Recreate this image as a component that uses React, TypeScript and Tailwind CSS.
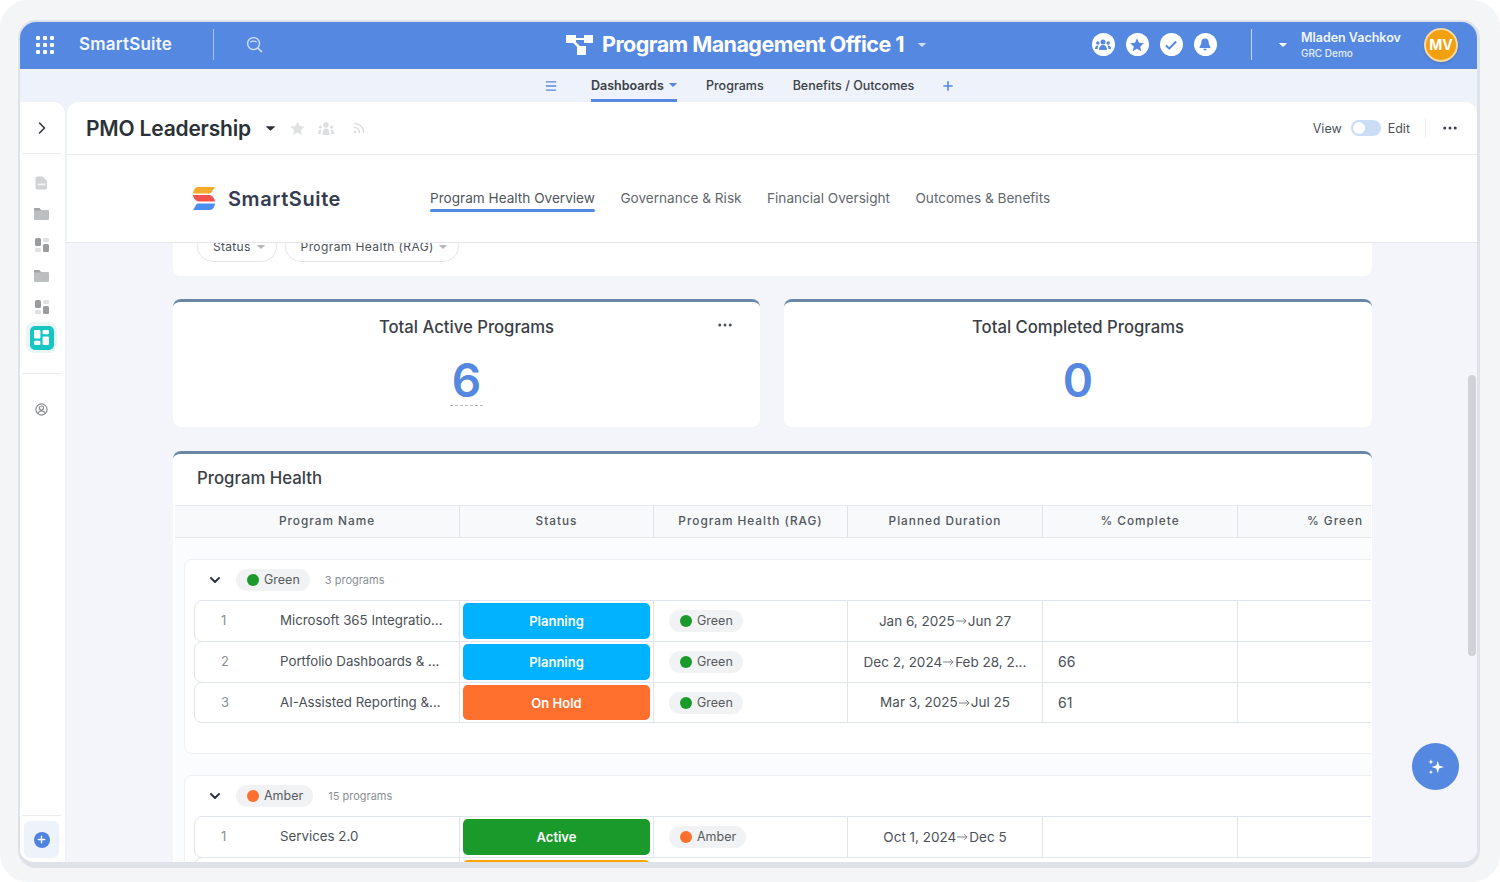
import React from 'react';
import { ChevronDown, ChevronRight, Menu, MoreHorizontal, Plus, Rss } from 'lucide-react';

const Caret = ({ className }: { className: string }) => (
  <svg viewBox="0 0 10 5" className={className} fill="currentColor">
    <path d="M0.6 0h8.8c.4 0 .6.4.3.7L5.4 4.7c-.2.2-.6.2-.8 0L.3.7C0 .4.2 0 .6 0z" />
  </svg>
);

const GridDots = () => (
  <div className="grid grid-cols-3 gap-[3px] w-[18px]">
    {Array.from({ length: 9 }).map((_, i) => (
      <span key={i} className="w-1 h-1 bg-white rounded-[1px]" />
    ))}
  </div>
);

const FlowIcon = () => (
  <svg viewBox="0 0 27 20" className="w-[27px] h-[20px]" fill="white">
    <rect x="0" y="0" width="10" height="8" />
    <rect x="18" y="0" width="9" height="8" />
    <rect x="11" y="11" width="9" height="9" />
    <rect x="9" y="3" width="10" height="2" />
    <path d="M7 6l6.500 6.500" stroke="white" strokeWidth="2.500" />
  </svg>
);

const SearchRing = () => (
  <svg viewBox="0 0 18 18" className="w-[17px] h-[17px]" fill="none" stroke="#cfdef7">
    <circle cx="8" cy="8" r="6.300" strokeWidth="1.500" />
    <path d="M12.600 12.800L16.500 16.500" strokeWidth="1.600" strokeLinecap="round" />
    <path d="M5 6.300c1.200-1.200 4.400-1.300 6 0" strokeWidth="1.300" strokeLinecap="round" />
  </svg>
);

const DocIcon = () => (
  <svg viewBox="0 0 14 15" className="w-[13px] h-[14px]">
    <path d="M2.500 0.500h5.500l5 4.500v7.500a2 2 0 0 1-2 2h-8.500a2 2 0 0 1-2-2v-10a2 2 0 0 1 2-2z" fill="#d0d2d4" />
    <rect x="3" y="8" width="8" height="2" fill="#f2f2f2" />
  </svg>
);

const FolderIcon = () => (
  <svg viewBox="0 0 15 12" className="w-[15px] h-[12px]">
    <path d="M1 0h4.500l1.500 2h7a1 1 0 0 1 1 1v8a1 1 0 0 1-1 1H1a1 1 0 0 1-1-1V1a1 1 0 0 1 1-1z" fill="#bcbfc0" />
    <path d="M0 1a1 1 0 0 1 1-1h4.500l1.500 2.500H0z" fill="#a2a5a6" />
  </svg>
);

const BoardIcon = () => (
  <svg viewBox="0 0 14 14" className="w-[14px] h-[14px]">
    <rect x="0" y="0" width="6" height="8" rx="1.500" fill="#9a9c9e" />
    <rect x="8" y="0" width="6" height="4" rx="1.200" fill="#e0e1e2" />
    <rect x="0" y="10" width="6" height="4" rx="1.200" fill="#e0e1e2" />
    <rect x="8" y="6" width="6" height="8" rx="1.500" fill="#9a9c9e" />
  </svg>
);

const Circle = ({ children }: { children: React.ReactNode }) => (
  <div className="w-[23px] h-[23px] rounded-full bg-white flex items-center justify-center">{children}</div>
);

const Rag = ({ color, label }: { color: string; label: string }) => (
  <div className="inline-flex items-center h-[22px] rounded-full bg-[#f1f2f3] pl-[11px] pr-[10px] gap-[5px]">
    <span className={`w-3 h-3 rounded-full ${color}`} />
    <span className="text-[12.500px] pt-px text-[#555b60]">{label}</span>
  </div>
);

const Duration = ({ from, to }: { from: string; to: string }) => (
  <div className="flex items-center justify-center text-[13.500px] text-[#4b5157]">
    <span>{from}</span>
    <svg viewBox="0 0 12 8" className="w-[11px] h-2 mx-[1px]" fill="none" stroke="#6f7479" strokeWidth="1">
      <path d="M0 4h11M8 1l3 3-3 3" />
    </svg>
    <span>{to}</span>
  </div>
);

type RowData = {
  n: number;
  name: string;
  status: string;
  statusBg: string;
  ragColor: string;
  rag: string;
  from: string;
  to: string;
  pct?: string;
};

const Row = ({ row, last }: { row: RowData; last?: boolean }) => (
  <div className={`flex w-[1300px] border border-[#e1e5ee] rounded-l-lg bg-white ${last ? 'h-[41px]' : 'h-[42px] -mb-px'}`}>
    <div className="w-[85px] shrink-0 pl-[26px] flex items-center text-[13px] text-[#8b8f94]">{row.n}</div>
    <div className="w-[179px] shrink-0 flex items-center text-[13.300px] text-[#4b5157] whitespace-nowrap">{row.name}</div>
    <div className="w-[194px] shrink-0 border-l border-[#e1e5ee] flex items-center px-[3px]">
      <div className={`w-full ${last ? 'h-[35px]' : 'h-[36px]'} pt-[2px] rounded-[5px] flex items-center justify-center text-white text-[13px] font-semibold ${row.statusBg}`}>
        {row.status}
      </div>
    </div>
    <div className="w-[194px] shrink-0 border-l border-[#e1e5ee] flex items-center pl-[15px]">
      <Rag color={row.ragColor} label={row.rag} />
    </div>
    <div className="w-[195px] shrink-0 border-l border-[#e1e5ee] flex items-center justify-center">
      <Duration from={row.from} to={row.to} />
    </div>
    <div className="w-[195px] shrink-0 border-l border-[#e1e5ee] flex items-center pl-[15px] pb-px text-[14px] text-[#4b5157]">{row.pct}</div>
    <div className="flex-1 border-l border-[#e1e5ee]" />
  </div>
);

const GroupHead = ({ dot, label, count, gap }: { dot: string; label: string; count: string; gap: string }) => (
  <div className="h-[40px] flex items-center">
    <ChevronDown className="w-[16px] h-[16px] ml-[22px] text-[#2b3138]" strokeWidth={2.800} />
    <div className="ml-[13px]">
      <Rag color={dot} label={label} />
    </div>
    <span className={`text-[11px] text-[#8b8f94] ${gap}`}>{count}</span>
  </div>
);

const greenRows: RowData[] = [
  { n: 1, name: 'Microsoft 365 Integratio...', status: 'Planning', statusBg: 'bg-[#00b2ff]', ragColor: 'bg-[#1a9a2b]', rag: 'Green', from: 'Jan 6, 2025', to: 'Jun 27' },
  { n: 2, name: 'Portfolio Dashboards & ...', status: 'Planning', statusBg: 'bg-[#00b2ff]', ragColor: 'bg-[#1a9a2b]', rag: 'Green', from: 'Dec 2, 2024', to: 'Feb 28, 2...', pct: '66' },
  { n: 3, name: 'AI-Assisted Reporting &...', status: 'On Hold', statusBg: 'bg-[#ff6f2e]', ragColor: 'bg-[#1a9a2b]', rag: 'Green', from: 'Mar 3, 2025', to: 'Jul 25', pct: '61' },
];

const amberRow: RowData = {
  n: 1, name: 'Services 2.0', status: 'Active', statusBg: 'bg-[#1a9a2b]', ragColor: 'bg-[#ff6f2e]', rag: 'Amber', from: 'Oct 1, 2024', to: 'Dec 5',
};

const columns = [
  { label: 'Program Name', w: 'w-[285px] pl-[20px]' },
  { label: 'Status', w: 'w-[194px]' },
  { label: 'Program Health (RAG)', w: 'w-[194px]' },
  { label: 'Planned Duration', w: 'w-[195px]' },
  { label: '% Complete', w: 'w-[195px]' },
  { label: '% Green', w: 'w-[195px]' },
];

const Kpi = ({ title, value, menu, className }: { title: string; value: string; menu?: boolean; className: string }) => (
  <div className={`relative h-[128px] bg-white rounded-lg border-t-[3px] border-[#6a87a8] flex flex-col items-center ${className}`}>
    <div className="mt-[15px] text-[16.700px] leading-[20px] font-medium text-[#3a4046]">{title}</div>
    <div className={`mt-[18px] text-[46px] leading-[50px] font-semibold text-[#5588e0] ${menu ? 'border-b border-dashed border-[#b5b8bc] px-[2px]' : ''}`}>{value}</div>
    {menu && <MoreHorizontal className="absolute right-[26px] top-[14px] w-[18px] h-[18px] text-[#4b5157]" />}
  </div>
);

export default function App() {
  return (
    <div className="w-[1500px] h-[882px] overflow-hidden bg-white font-['Inter',sans-serif]">
      <div className="w-full h-full bg-[#f4f5f7] rounded-[28px] pl-[18px] pt-[20px]">
        <div className="relative w-[1462px] h-[848px] border-2 border-r-[3px] border-b-[6px] border-[#dfe2e9] rounded-[18px] overflow-hidden bg-[#edf2fb] flex flex-col">
          {/* Top bar */}
          <div className="h-[47px] shrink-0 bg-[#5588e0] flex items-center text-white pb-[2px]">
            <div className="ml-[16px]"><GridDots /></div>
            <div className="ml-[25px] w-[98px] text-[17px] font-semibold tracking-[0.2px] text-[#f2f6fd]">SmartSuite</div>
            <div className="ml-[36px] w-px h-[31px] bg-[#a9c3ef]" />
            <div className="ml-[32px]"><SearchRing /></div>
            <div className="ml-[303px]"><FlowIcon /></div>
            <div className="ml-[9px] text-[21.500px] font-bold tracking-[-0.55px] whitespace-nowrap">Program Management Office 1</div>
            <Caret className="ml-[14px] w-2 h-1 text-[#cfdef7]" />
            <div className="ml-[166px] flex gap-[11px]">
              <Circle>
                <svg viewBox="0 0 16 12" className="w-[16px] h-[12px]" fill="#5588e0">
                  <circle cx="8" cy="3" r="2.500" /><circle cx="2.800" cy="4" r="1.700" /><circle cx="13.200" cy="4" r="1.700" />
                  <path d="M4 11c0-3 1.500-5 4-5s4 2 4 5zM0 10c0-2 1-3.500 2.800-3.500.6 0 .8.100 .8.100-.6 1-1 2-1 3.400zM16 10c0-2-1-3.500-2.800-3.500-.6 0-.8.100-.8.100.6 1 1 2 1 3.400z" />
                </svg>
              </Circle>
              <Circle>
                <svg viewBox="0 0 24 24" className="w-[16px] h-[16px]" fill="#5588e0"><path d="M12 2l3 6.600 7.200.8-5.400 4.800 1.500 7.100L12 17.600 5.700 21.300l1.500-7.100L1.800 9.400 9 8.600z" /></svg>
              </Circle>
              <Circle>
                <svg viewBox="0 0 14 11" className="w-[12px] h-[10px]" fill="none" stroke="#5588e0" strokeWidth="2.400"><path d="M1 6l4 3.500L13 1.500" /></svg>
              </Circle>
              <Circle>
                <svg viewBox="0 0 14 15" className="w-[12px] h-[13px]" fill="#5588e0"><path d="M7 0.500c2.800 0 4.300 2 4.300 4.500 0 3 1.700 4.500 2.200 6.500h-13c.5-2 2.200-3.500 2.200-6.500C2.700 2.500 4.200.500 7 .500zM5 12.500h4a2 2 0 0 1-4 0z" /></svg>
              </Circle>
            </div>
            <div className="ml-[34px] w-px h-[31px] bg-[#c6d7f5]" />
            <Caret className="ml-[27px] w-2 h-1 text-white" />
            <div className="ml-[14px] w-[123px] flex flex-col">
              <span className="text-[12.500px] leading-[16px] font-semibold text-[#f2f6fd]">Mladen Vachkov</span>
              <span className="text-[10px] leading-[14px] font-medium text-[#e3ecfb]">GRC Demo</span>
            </div>
            <div className="w-[34px] h-[34px] rounded-full bg-[#f29f10] border-2 border-[#f8d99e] shadow flex items-center justify-center text-[14px] font-bold">MV</div>
          </div>

          {/* App tabs */}
          <div className="h-[33px] shrink-0 flex items-stretch text-[12.500px] font-medium text-[#3a4046]">
            <div className="ml-[524px] w-[47px] flex items-center"><Menu className="w-[14px] h-[14px] text-[#5588e0]" strokeWidth={2.200} /></div>
            <div className="w-[86px] flex items-center justify-between border-b-[3px] border-[#5588e0] font-semibold pt-[4px]">
              <span>Dashboards</span>
              <Caret className="w-2 h-1 text-[#5588e0] mb-[3px]" />
            </div>
            <div className="ml-[29px] flex items-center pt-px">Programs</div>
            <div className="ml-[29px] flex items-center pt-px">Benefits / Outcomes</div>
            <div className="ml-[27px] flex items-center"><Plus className="w-[14px] h-[14px] text-[#5588e0]" strokeWidth={2.800} /></div>
          </div>

          <div className="flex-1 min-h-0 flex gap-[2px]">
            {/* Sidebar */}
            <div className="w-[45px] shrink-0 bg-white rounded-tr-xl flex flex-col items-center pr-[2px]">
              <div className="h-[52px] w-[39px] shrink-0 border-b border-[#e9ebef] flex items-center justify-center">
                <ChevronRight className="w-[20px] h-[20px] text-[#2b3138]" strokeWidth={1.800} />
              </div>
              <div className="flex flex-col items-center">
                <div className="h-[31px] mt-[13px] flex items-center"><DocIcon /></div>
                <div className="h-[31px] flex items-center"><FolderIcon /></div>
                <div className="h-[31px] flex items-center"><BoardIcon /></div>
                <div className="h-[31px] flex items-center"><FolderIcon /></div>
                <div className="h-[31px] flex items-center"><BoardIcon /></div>
                <div className="w-[31px] h-[31px] rounded-lg bg-[#e8f6f6] flex items-center justify-center">
                  <div className="w-[24px] h-[24px] rounded-[5px] bg-[#17c5c2] flex items-center justify-center">
                    <svg viewBox="0 0 14 14" className="w-[15px] h-[15px]" fill="white">
                      <rect x="0" y="0" width="6" height="8" rx="1.200" /><rect x="8" y="0" width="6" height="4" rx="1.200" />
                      <rect x="0" y="10" width="6" height="4" rx="1.200" /><rect x="8" y="6" width="6" height="8" rx="1.200" />
                    </svg>
                  </div>
                </div>
              </div>
              <div className="mt-[20px] w-[39px] border-t border-[#e9ebef]" />
              <svg viewBox="0 0 14 14" className="mt-[29px] w-[13px] h-[13px]" fill="none" stroke="#84878a" strokeWidth="1.200">
                <circle cx="7" cy="7" r="6" /><circle cx="7" cy="5.500" r="2.200" /><path d="M3 11c1-2 2.500-2.500 4-2.500s3 .5 4 2.500" />
              </svg>
              <div className="mt-auto w-[39px] border-t border-[#e9ebef]" />
              <div className="mt-[5px] mb-[4px] w-[35px] h-[37px] rounded-md bg-[#edf2fb] flex items-center justify-center">
                <div className="w-4 h-4 rounded-full bg-[#4f82de] flex items-center justify-center">
                  <Plus className="w-[11px] h-[11px] text-white" strokeWidth={3} />
                </div>
              </div>
            </div>

            {/* Main */}
            <div className="flex-1 min-w-0 flex flex-col rounded-t-xl overflow-hidden">
              <div className="h-[53px] shrink-0 bg-white border-b border-[#e9ebef] flex items-center">
                <span className="ml-[19px] pt-[2px] text-[21px] font-semibold tracking-[-0.2px] text-[#2b3138]">PMO Leadership</span>
                <Caret className="ml-[15px] w-[9px] h-[5px] text-[#2b3138]" />
                <svg viewBox="0 0 24 24" className="ml-[14px] w-[17px] h-[17px]" fill="#e0e1e2"><path d="M12 2l3 6.600 7.200.8-5.400 4.800 1.500 7.100L12 17.600 5.700 21.300l1.500-7.100L1.800 9.400 9 8.600z" /></svg>
                <svg viewBox="0 0 16 13" className="ml-[12px] w-4 h-[13px]" fill="#dcdddf">
                  <circle cx="8" cy="3" r="2.700" /><circle cx="2.500" cy="5" r="1.600" /><circle cx="13.500" cy="5" r="1.600" />
                  <path d="M4.500 13c0-4 1-6.500 3.500-6.500s3.500 2.500 3.500 6.500zM0 12c0-2 .8-4.500 2.500-4.500.5 0 .9.200.9.200-.4 1-.7 2.500-.7 4.300zM16 12c0-2-.8-4.500-2.500-4.500-.5 0-.9.200-.9.200.4 1 .7 2.500.7 4.300z" />
                </svg>
                <Rss className="ml-[18px] w-[14px] h-[14px] text-[#dcdddf]" strokeWidth={2.200} />
                <div className="ml-auto flex items-center text-[12.500px] text-[#4b5157]">
                  <span className="pt-[2px]">View</span>
                  <div className="ml-[9px] w-[30px] h-4 rounded-full bg-[#cbdcf6] p-[2px]">
                    <div className="w-3 h-3 rounded-full bg-white" />
                  </div>
                  <span className="ml-[7px] pt-[2px]">Edit</span>
                  <div className="ml-[15px] w-px h-[20px] bg-[#eceef1]" />
                  <MoreHorizontal className="ml-[15px] mr-[18px] w-[18px] h-[18px] text-[#3a4046]" />
                </div>
              </div>

              <div className="h-[88px] shrink-0 bg-white border-b border-[#e5e7ec] flex items-center">
                <svg viewBox="0 0 22 23" className="ml-[126px] w-[22px] h-[23px]">
                  <path d="M5 0h17l-2.500 4c-.8 1.500-2 2.500-3.500 2.500H0C.5 3 2 0 5 0z" fill="#f7ab2e" />
                  <path d="M0 8h16c3 0 5.500 3 6 6.500H6c-3 0-5.500-3-6-6.500z" fill="#f4524f" />
                  <path d="M5 16.500h17c-.5 3.500-2 6.500-5 6.500H0l2.500-4c.8-1.500 1-2.500 2.500-2.500z" fill="#4d8ff0" />
                </svg>
                <span className="ml-[13px] w-[202px] text-[20px] font-semibold tracking-[0.6px] text-[#343b52]">SmartSuite</span>
                <div className="flex gap-[25.500px] text-[13.600px] text-[#62676c] pb-[1px]">
                  <div className="relative text-[#50565b]">
                    Program Health Overview
                    <div className="absolute left-0 right-0 -bottom-[4px] h-[3px] rounded-full bg-[#5588e0]" />
                  </div>
                  <span>Governance &amp; Risk</span>
                  <span>Financial Oversight</span>
                  <span>Outcomes &amp; Benefits</span>
                </div>
              </div>

              <div className="flex-1 min-h-0 bg-[#f3f5fb] pl-[106px] overflow-hidden">
                <div className="w-[1199px] h-full flex flex-col">
                  <div className="h-[33px] shrink-0 bg-white rounded-b-lg overflow-hidden">
                    <div className="flex gap-[8px] pl-[24px] -mt-[12px]">
                      <div className="h-[31px] pl-[15px] pr-[11px] rounded-full border border-[#e4e6ea] flex items-center gap-[6px] text-[12px] text-[#4b5157] tracking-[0.3px]">
                        Status <Caret className="w-2 h-1 text-[#b5b8bc]" />
                      </div>
                      <div className="h-[31px] pl-[15px] pr-[11px] rounded-full border border-[#e4e6ea] flex items-center gap-[5px] text-[12px] text-[#4b5157] tracking-[0.4px]">
                        Program Health (RAG) <Caret className="w-2 h-1 text-[#b5b8bc]" />
                      </div>
                    </div>
                  </div>

                  <div className="mt-[23px] flex gap-[24px] shrink-0">
                    <Kpi title="Total Active Programs" value="6" menu className="w-[587px]" />
                    <Kpi title="Total Completed Programs" value="0" className="flex-1" />
                  </div>

                  <div className="mt-[24px] flex-1 min-h-0 bg-white rounded-t-lg border-t-[3px] border-[#6a87a8] overflow-hidden">
                    <div className="h-[51px] pl-[24px] pb-[2px] flex items-center text-[16.800px] font-medium text-[#3a4046]">Program Health</div>
                    <div className="ml-[2px] w-[1196px] overflow-hidden bg-[#fbfcfe]">
                      <div className="h-[33px] w-[1300px] flex bg-[#f8f9fb] border-y border-[#e5e7ec]">
                        {columns.map(c => (
                          <div key={c.label} className={`${c.w} shrink-0 border-r border-[#dfe2e8] flex items-center justify-center pt-px text-[11.800px] font-medium tracking-[1px] text-[#50565b]`}>
                            {c.label}
                          </div>
                        ))}
                      </div>
                      <div className="pt-[21px] pl-[9px]">
                        <div className="h-[195px] w-[1300px] bg-white border border-[#eef0f4] rounded-l-lg">
                          <GroupHead dot="bg-[#1a9a2b]" label="Green" count="3 programs" gap="ml-[15px]" />
                          <div className="pl-[9px]">
                            {greenRows.map((r, i) => (
                              <Row key={r.n} row={r} last={i === 2} />
                            ))}
                          </div>
                        </div>
                        <div className="mt-[21px] w-[1300px] bg-white border border-[#eef0f4] rounded-l-lg">
                          <GroupHead dot="bg-[#ff6f2e]" label="Amber" count="15 programs" gap="ml-[15px]" />
                          <div className="pl-[9px]">
                            <Row row={amberRow} />
                            <div className="flex h-[20px] w-[1300px] border border-[#e1e5ee] rounded-l-lg">
                              <div className="w-[264px] shrink-0" />
                              <div className="w-[194px] shrink-0 border-l border-[#e1e5ee] px-[3px] pt-[2px]">
                                <div className="h-[20px] rounded-[5px] bg-[#ffa500]" />
                              </div>
                            </div>
                          </div>
                        </div>
                      </div>
                    </div>
                  </div>
                </div>
              </div>
            </div>
          </div>

          {/* Scrollbar + AI button sit over the page */}
          <div className="absolute right-[1px] top-[353px] w-[8px] h-[281px] rounded-full bg-[#d0d2d6]" />
          <div className="absolute left-[1392px] top-[721px] w-[47px] h-[47px] rounded-full bg-[#5588e0] flex items-center justify-center">
            <svg viewBox="0 0 16 16" className="w-[18px] h-[18px]" fill="white">
              <path d="M9.500 2.500l1.300 4.200L15 8l-4.200 1.300L9.500 13.500 8.200 9.300 4 8l4.200-1.300z" />
              <path d="M3.500 1l.6 1.900 1.900.6-1.900.6-.6 1.900-.6-1.900L1 3.500l1.900-.6z" />
              <path d="M3.500 10.500l.5 1.500 1.500.5-1.500.5-.5 1.500-.5-1.500-1.500-.5 1.500-.5z" />
            </svg>
          </div>
        </div>
      </div>
    </div>
  );
}
